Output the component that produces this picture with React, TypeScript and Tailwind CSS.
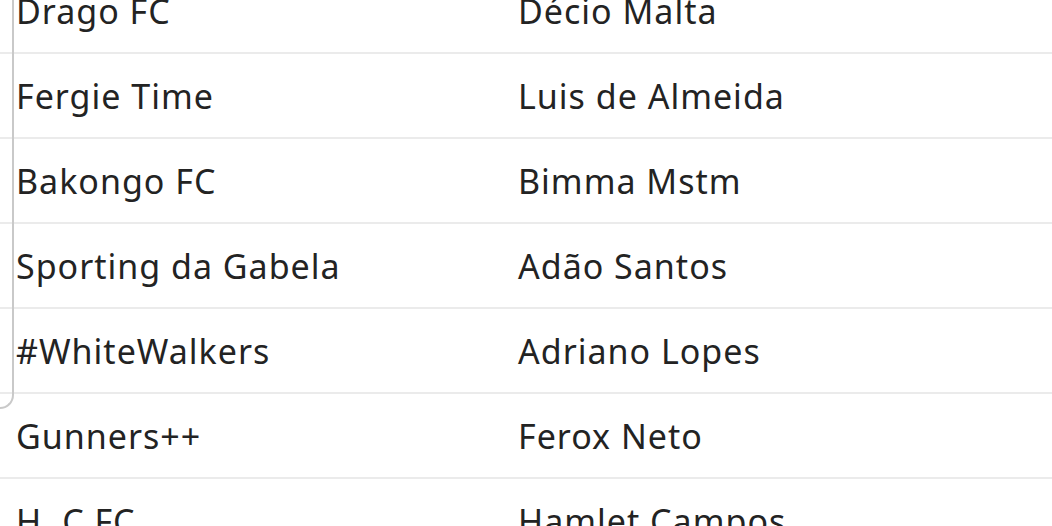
const rows: [string, string][] = [
  ["Drago FC", "Décio Malta"],
  ["Fergie Time", "Luis de Almeida"],
  ["Bakongo FC", "Bimma Mstm"],
  ["Sporting da Gabela", "Adão Santos"],
  ["#WhiteWalkers", "Adriano Lopes"],
  ["Gunners++", "Ferox Neto"],
  ["H. C FC", "Hamlet Campos"],
];

export default function App() {
  return (
    <div
      className="relative h-[526px] w-[1052px] overflow-hidden bg-white text-[#232323]"
      style={{ fontFamily: "'Noto Sans', Lato, sans-serif" }}
    >
      {/* edge of the panel behind the table */}
      <div className="absolute -left-[40px] -top-[20px] h-[429px] w-[54px] rounded-br-[14px] border-r-2 border-b-2 border-[#c9c9c9]" />

      <div className="-mt-[31px]">
        {rows.map(([team, owner]) => (
          <div
            key={team}
            className="flex h-[85px] items-center border-b-2 border-[#ebebeb] text-[34px] leading-none tracking-[1px]"
          >
            <div className="w-[518px] pl-[16px]">{team}</div>
            <div className="flex-1">{owner}</div>
          </div>
        ))}
      </div>
    </div>
  );
}
